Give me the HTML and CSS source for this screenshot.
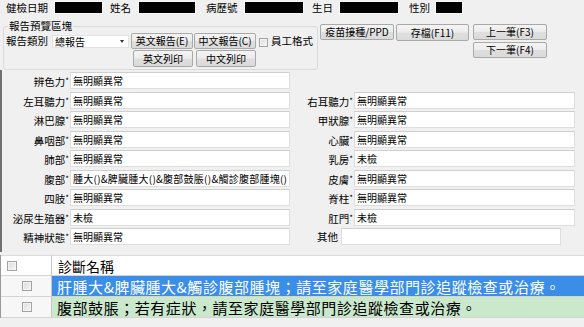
FILE: index.html
```html
<!DOCTYPE html>
<html lang="zh-Hant">
<head>
<meta charset="utf-8">
<title>報告預覽</title>
<link rel="stylesheet" href="styles.css">
</head>
<body>
<div class="app">
  <div class="topbar">
    <span class="tlabel l1">健檢日期</span><span class="mask m1"></span>
    <span class="tlabel l2">姓名</span><span class="mask m2"></span>
    <span class="tlabel l3">病歷號</span><span class="mask m3"></span>
    <span class="tlabel l4">生日</span><span class="mask m4"></span>
    <span class="tlabel l5">性別</span><span class="mask m5"></span>
  </div>

  <div class="toolbar">
    <fieldset class="group">
      <legend>報告預覽區塊</legend>
      <div class="group-body">
        <span class="glabel">報告類別</span>
        <div class="combo"><span class="combo-text">總報告</span><span class="arrow"></span></div>
        <button class="btn">英文報告(E)</button>
        <button class="btn">中文報告(C)</button>
        <span class="chk-label"><span class="chk"></span>員工格式</span>
        <button class="btn print p-en">英文列印</button>
        <button class="btn print">中文列印</button>
      </div>
    </fieldset>
    <div class="actions">
      <button class="btn a-vac">疫苗接種/PPD</button>
      <button class="btn a-save">存檔(F11)</button>
      <div class="nav">
        <button class="btn">上一筆(F3)</button>
        <button class="btn">下一筆(F4)</button>
      </div>
    </div>
  </div>

  <div class="form">
    <span class="flabel">辨色力<i>*</i></span><span class="fbox">無明顯異常</span>
    <span class="fempty"></span>

    <span class="flabel">左耳聽力<i>*</i></span><span class="fbox">無明顯異常</span>
    <span class="flabel">右耳聽力<i>*</i></span><span class="fbox">無明顯異常</span>

    <span class="flabel">淋巴腺<i>*</i></span><span class="fbox">無明顯異常</span>
    <span class="flabel">甲狀腺<i>*</i></span><span class="fbox">無明顯異常</span>

    <span class="flabel">鼻咽部<i>*</i></span><span class="fbox">無明顯異常</span>
    <span class="flabel">心臟<i>*</i></span><span class="fbox">無明顯異常</span>

    <span class="flabel">肺部<i>*</i></span><span class="fbox">無明顯異常</span>
    <span class="flabel">乳房<i>*</i></span><span class="fbox">未檢</span>

    <span class="flabel">腹部<i>*</i></span><span class="fbox fbox-long">腫大()&amp;脾臟腫大()&amp;腹部鼓脹()&amp;觸診腹部腫塊()</span>
    <span class="flabel">皮膚<i>*</i></span><span class="fbox">無明顯異常</span>

    <span class="flabel">四肢<i>*</i></span><span class="fbox">無明顯異常</span>
    <span class="flabel">脊柱<i>*</i></span><span class="fbox">無明顯異常</span>

    <span class="flabel">泌尿生殖器<i>*</i></span><span class="fbox">未檢</span>
    <span class="flabel">肛門<i>*</i></span><span class="fbox">未檢</span>

    <span class="flabel">精神狀態<i>*</i></span><span class="fbox">無明顯異常</span>
    <span class="fother"><span class="olabel">其他</span><span class="fbox obox"></span></span>
  </div>

  <div class="diag">
    <div class="dcell dhead dchk"><span class="chk hchk"></span></div>
    <div class="dcell dhead dtext">診斷名稱</div>

    <div class="dcell drow dchk"><span class="chk rchk"></span></div>
    <div class="dcell drow dtext sel">肝腫大&amp;脾臟腫大&amp;觸診腹部腫塊；請至家庭醫學部門診追蹤檢查或治療。</div>

    <div class="dcell drow dchk"><span class="chk rchk"></span></div>
    <div class="dcell drow dtext alt">腹部鼓脹；若有症狀，請至家庭醫學部門診追蹤檢查或治療。</div>
  </div>
</div>
</body>
</html>
```

FILE: styles.css
```css
* { box-sizing: border-box; }

html, body {
  margin: 0;
  padding: 0;
}

body {
  width: 584px;
  height: 327px;
  overflow: hidden;
  background: #f0f0f0;
  font-family: "Noto Sans CJK TC", "Noto Sans", sans-serif;
  color: #000;
}

.app {
  width: 584px;
  height: 327px;
  display: flex;
  flex-direction: column;
}

/* ---------- top bar ---------- */
.topbar {
  display: flex;
  align-items: center;
  height: 15px;
  font-size: 10.5px;
  line-height: 12px;
}
.tlabel { flex: none; white-space: nowrap; }
.l1 { margin-left: 6px; width: 49px; }
.l2 { margin-left: 8px; width: 29px; }
.l3 { margin-left: 11px; width: 39px; }
.l4 { margin-left: 9px; width: 28px; }
.l5 { margin-left: 11px; width: 27px; }
.mask {
  flex: none;
  height: 11px;
  background: #000;
  box-shadow: 0 0 0 1px #fafafa;
}
.m1 { width: 47px; }
.m2 { width: 56px; }
.m3 { width: 58px; }
.m4 { width: 58px; }
.m5 { width: 26px; }

/* ---------- toolbar ---------- */
.toolbar {
  display: flex;
  height: 55px;
  flex: none;
}

.group {
  margin: 5px 0 0 3px;
  padding: 0 0 2px 2px;
  width: 315px;
  height: 50px;
  border: 1px solid #dadada;
  border-radius: 3px;
  min-width: 0;
}
.group legend {
  margin-left: 2px;
  padding: 0 1px;
  font-size: 10.5px;
  line-height: 12px;
}

.group-body {
  display: grid;
  grid-template-columns: 45px 78px 62px 62px auto;
  grid-template-rows: 16px 17px;
  column-gap: 1px;
  row-gap: 1px;
  padding-top: 1px;
  align-items: center;
}
.glabel {
  font-size: 10.5px;
  line-height: 12px;
  white-space: nowrap;
}
.combo {
  height: 13px;
  background: #fff;
  border: 1px solid #e2e2e2;
  display: flex;
  align-items: center;
  justify-content: space-between;
  padding: 0 4px 0 2px;
  margin-right: 1px;
  font-size: 10px;
  line-height: 11px;
}
.arrow {
  width: 0;
  height: 0;
  border-left: 2.5px solid transparent;
  border-right: 2.5px solid transparent;
  border-top: 3px solid #333;
}

.btn {
  height: 100%;
  margin: 0;
  padding: 0;
  font-family: inherit;
  font-size: 10px;
  line-height: 12px;
  color: #000;
  border: 1px solid #a9a9a9;
  border-radius: 2px;
  background: linear-gradient(#f4f4f4 0%, #ececec 48%, #dfdfdf 52%, #dadada 100%);
  white-space: nowrap;
}
.print {
  width: 60px;
  margin-left: 2px;
  grid-row: 2;
}
.p-en { grid-column: 3; }
.print:not(.p-en) { grid-column: 4; }

.chk-label {
  display: flex;
  align-items: center;
  font-size: 10.5px;
  line-height: 12px;
  white-space: nowrap;
  margin-left: 2px;
}
.chk {
  display: inline-block;
  flex: none;
  width: 9px;
  height: 9px;
  border: 1px solid #a2a2a2;
  background: linear-gradient(135deg, #dcdcdc, #f6f6f6);
  box-shadow: inset 0 0 0 1px #f4f4f4;
}
.chk-label .chk {
  margin: 2px 3px 0 0;
}

.actions {
  display: flex;
  align-items: flex-start;
  margin: 9px 0 0 2px;
}
.actions > .btn { height: 16px; }
.a-vac { width: 74px; }
.a-save { width: 73px; margin-left: 2px; height: 17px !important; }
.nav {
  display: flex;
  flex-direction: column;
  gap: 2px;
  margin-left: 4px;
}
.nav .btn { width: 74px; height: 16px; }

/* ---------- form ---------- */
.form {
  flex: none;
  height: 182px;
  border-left: 2px solid #707070;
  display: grid;
  grid-template-columns: 68px 220px 64px 221px;
  grid-auto-rows: 17px;
  row-gap: 2.5px;
  padding-top: 2px;
  align-content: start;
}
.flabel {
  text-align: right;
  padding-right: 1px;
  font-size: 10.5px;
  line-height: 17px;
  white-space: nowrap;
}
.flabel i {
  font-style: normal;
  font-size: 8px;
  vertical-align: 2px;
}
.fbox {
  display: block;
  height: 17px;
  background: #fff;
  border: 1px solid #dedede;
  border-top-color: #cfcfcf;
  padding-left: 2px;
  font-size: 10px;
  line-height: 15px;
  white-space: nowrap;
  overflow: hidden;
}
.fbox-long { letter-spacing: 0.25px; }
.fempty { grid-column: span 2; }
.fother {
  grid-column: span 2;
  display: flex;
}
.olabel {
  width: 24px;
  margin-left: 27px;
  font-size: 10.5px;
  line-height: 17px;
  white-space: nowrap;
}
.obox { width: 220px; }

/* ---------- diagnosis grid ---------- */
.diag {
  flex: none;
  margin-top: 3px;
  display: grid;
  grid-template-columns: 51px 1fr;
  grid-template-rows: 21px 21px 21px;
  border-left: 1px solid #9a9a9a;
}
.dcell {
  border-bottom: 1px solid #d4d4d4;
  display: flex;
  align-items: center;
}
.dchk {
  border-right: 1px solid #c6c6c6;
  background: #f7f7f7;
}
.dhead { background: #fff; border-top: 1px solid #dcdcdc; }
.dhead.dchk { background: #fff; }
.hchk { width: 10px; height: 10px; margin-left: 6px; }
.rchk { width: 10px; height: 10px; margin-left: 21px; }
.dtext {
  white-space: nowrap;
  overflow: hidden;
}
.dhead.dtext {
  padding-left: 6px;
  font-size: 14px;
  line-height: 18px;
}
.drow.dtext {
  padding-left: 5px;
  font-size: 15px;
  line-height: 19px;
  letter-spacing: 0.55px;
}
.sel { background: #3a8ee8; color: #fff; }
.alt { background: #c9e8cc; }
```
